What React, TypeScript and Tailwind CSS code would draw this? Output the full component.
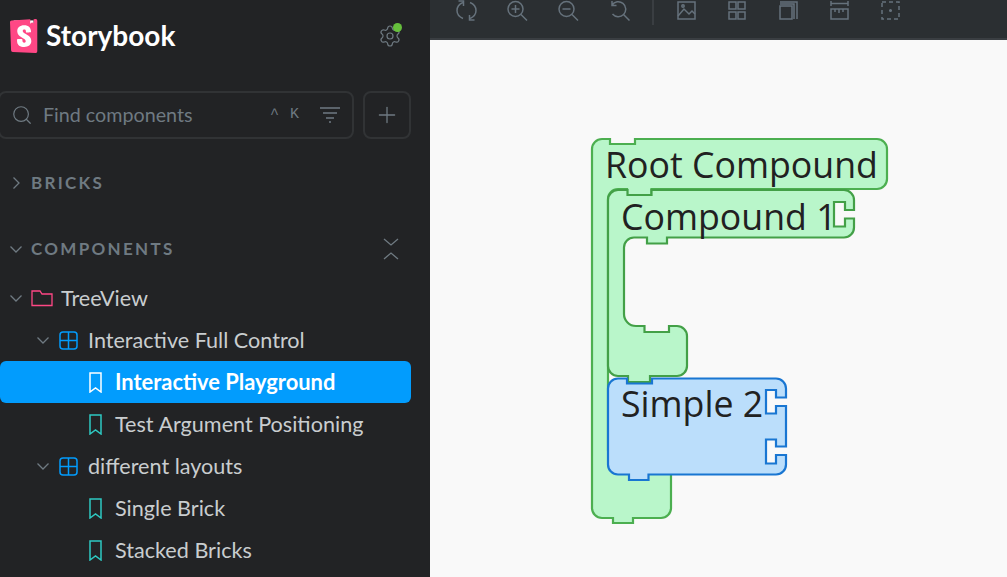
import { Search, Plus, Settings } from 'lucide-react';

type Row = {
  label: string;
  kind: 'folder' | 'component' | 'story';
  active?: boolean;
};

const rows: Row[] = [
  { label: 'TreeView', kind: 'folder' },
  { label: 'Interactive Full Control', kind: 'component' },
  { label: 'Interactive Playground', kind: 'story', active: true },
  { label: 'Test Argument Positioning', kind: 'story' },
  { label: 'different layouts', kind: 'component' },
  { label: 'Single Brick', kind: 'story' },
  { label: 'Stacked Bricks', kind: 'story' },
];

function Logo() {
  return (
    <svg width="28" height="34" viewBox="3 0 18.5 24" className="shrink-0">
      <rect x="5" y="1" width="14" height="22" fill="#fff" />
      <path
        fill="#FF4785"
        d="M16.71.243l-.12 2.71a.18.18 0 00.29.15l1.06-.8.9.7a.18.18 0 00.28-.14l-.1-2.76 1.33-.1a1.2 1.2 0 011.279 1.2v21.596a1.2 1.2 0 01-1.26 1.2l-16.096-.72a1.2 1.2 0 01-1.15-1.16l-.75-19.797a1.2 1.2 0 011.13-1.27L16.7.222zM13.64 9.3c0 .47 3.16.24 3.59-.08 0-3.2-1.72-4.89-4.859-4.89-3.15 0-4.899 1.72-4.899 4.29 0 4.45 5.999 4.53 5.999 6.959 0 .7-.32 1.1-1.05 1.1-.96 0-1.35-.49-1.3-2.16 0-.36-3.649-.48-3.769 0-.27 4.03 2.23 5.2 5.099 5.2 2.79 0 4.969-1.49 4.969-4.18 0-4.77-6.099-4.64-6.099-6.999 0-.97.72-1.1 1.13-1.1.45 0 1.25.07 1.19 1.87z"
      />
    </svg>
  );
}

function Chevron({ open, className }: { open: boolean; className?: string }) {
  return (
    <svg width="12" height="12" viewBox="0 0 12 12" fill="none" stroke="#6f7a82" strokeWidth="1.3" className={className}>
      {open ? <path d="M0.5 3.5 6 9l5.5-5.5" /> : <path d="M3.5 0.5 9 6l-5.5 5.5" />}
    </svg>
  );
}

function FolderIcon() {
  return (
    <svg width="22" height="18" viewBox="0 0 22 18" fill="none" stroke="#ff4785" strokeWidth="1.3" className="shrink-0">
      <path d="M1 2h8l2 3h10v11.5H1z" />
    </svg>
  );
}

function ComponentIcon() {
  return (
    <svg width="19" height="19" viewBox="0 0 19 19" fill="none" stroke="#029cfd" strokeWidth="1.5" className="shrink-0">
      <rect x="1" y="1" width="17" height="17" rx="3" />
      <path d="M9.5 1v17M1 9.5h17" />
    </svg>
  );
}

function StoryIcon({ active }: { active?: boolean }) {
  return (
    <svg width="13" height="21" viewBox="0 0 13 21" fill="none" stroke={active ? '#fff' : '#2ec9c2'} strokeWidth="1.5" className="shrink-0">
      <path d="M1 1h11v19l-5.5-4L1 20z" />
    </svg>
  );
}

function TreeRow({ row }: { row: Row }) {
  if (row.kind === 'folder') {
    return (
      <div className="h-[42px] flex items-center pl-[10px] text-[#c9cdcf]">
        <Chevron open />
        <span className="ml-[9px]"><FolderIcon /></span>
        <span className="ml-[8px]">{row.label}</span>
      </div>
    );
  }
  if (row.kind === 'component') {
    return (
      <div className="h-[42px] flex items-center pl-[37px] text-[#c9cdcf]">
        <Chevron open />
        <span className="ml-[10px]"><ComponentIcon /></span>
        <span className="ml-[10px]">{row.label}</span>
      </div>
    );
  }
  return (
    <div
      className={
        row.active
          ? 'h-[42px] flex items-center pl-[89px] rounded-[6px] bg-[#029cfd] text-white font-bold text-[21.9px]'
          : 'h-[42px] flex items-center pl-[89px] text-[#c9cdcf]'
      }
    >
      <StoryIcon active={row.active} />
      <span className="ml-[13px]">{row.label}</span>
    </div>
  );
}

function Sidebar() {
  return (
    <aside className="w-[430px] h-[577px] shrink-0 bg-[#222325] overflow-hidden font-['Lato',sans-serif]">
      <div className="flex items-center justify-between pt-[19px] pl-[10px] pr-[28px] h-[52px]">
        <div className="flex items-center gap-[8px]">
          <Logo />
          <span className="text-[28px] leading-[34px] font-bold text-white mb-[2px]">Storybook</span>
        </div>
        <div className="relative">
          <Settings size={24} strokeWidth={1.2} color="#6f7a82" />
          <span className="absolute -top-[1px] right-[0px] w-[9px] h-[9px] rounded-full bg-[#66bf3c]" />
        </div>
      </div>

      <div className="flex gap-[9px] mt-[39px] -ml-[2px] w-[413px] h-[48px]">
        <div className="flex-1 flex items-center rounded-[8px] border-2 border-[#313335] pl-[11px] pr-[12px]">
          <Search size={22} strokeWidth={1.3} color="#6f7a82" />
          <span className="ml-[10px] mb-[1px] text-[19.7px] text-[#6f7a82] flex-1">Find components</span>
          <span className="text-[15px] text-[#6f7a82] mr-[11px] font-['Liberation_Mono',monospace]">^</span>
          <span className="text-[15px] text-[#6f7a82] mr-[21px] font-['Liberation_Mono',monospace]">K</span>
          <svg width="20" height="16" viewBox="0 0 20 16" stroke="#6f7a82" strokeWidth="1.3" className="shrink-0">
            <path d="M0 1h20M3 6h14M6 11h8M9 15h2" />
          </svg>
        </div>
        <div className="w-[48px] flex items-center justify-center rounded-[8px] border-2 border-[#313335]">
          <Plus size={26} strokeWidth={1.2} color="#6f7a82" />
        </div>
      </div>

      <div className="flex items-center h-[24px] mt-[32px] pl-[10px] text-[17px] font-bold tracking-[2.3px] text-[#6f7a82]">
        <Chevron open={false} />
        <span className="ml-[9px]">BRICKS</span>
      </div>

      <div className="flex items-center justify-between h-[24px] mt-[42px] pl-[10px] pr-[31px] text-[17px] font-bold tracking-[2.3px] text-[#6f7a82]">
        <div className="flex items-center">
          <Chevron open />
          <span className="ml-[9px]">COMPONENTS</span>
        </div>
        <svg width="16" height="22" viewBox="0 0 16 22" fill="none" stroke="#6f7a82" strokeWidth="1.3">
          <path d="M1 1l7 6 7-6M1 21l7-6 7 6" />
        </svg>
      </div>

      <div className="mt-[16px] w-[411px] text-[21.6px]">
        {rows.map((row) => (
          <TreeRow key={row.label} row={row} />
        ))}
      </div>
    </aside>
  );
}

function ToolIcon({ children }: { children: React.ReactNode }) {
  return (
    <svg width="21" height="21" viewBox="0 0 21 21" fill="none" stroke="#66727c" strokeWidth="1.5" className="shrink-0">
      {children}
    </svg>
  );
}

function Toolbar() {
  return (
    <div className="h-[40px] shrink-0 bg-[#2b2f32] border-b-2 border-[#3a3e42] flex items-start pl-[26px] gap-[30px]">
      <ToolIcon>
        <path d="M7 2.5C3.5 4 1 7 1 10.5c0 3.5 2.5 6.5 6 8M14 18.5c3.5-1.5 6-4.5 6-8 0-3.5-2.5-6.5-6-8" />
        <path d="M2.5 1h5v5M18.5 20h-5v-5" />
      </ToolIcon>
      <ToolIcon>
        <circle cx="8.5" cy="9" r="7.5" />
        <path d="M14 14.5l6 6M8.5 5v8M4.5 9h8" />
      </ToolIcon>
      <ToolIcon>
        <circle cx="8.5" cy="9" r="7.5" />
        <path d="M14 14.5l6 6M4.5 9h8" />
      </ToolIcon>
      <ToolIcon>
        <path d="M3 5A7.5 7.5 0 1 1 3.5 14M3 1v4.5h4.5M14.5 14.5l6 6" />
      </ToolIcon>
      <div className="w-[2px] h-[25px] bg-[#3a3e42] -mx-[8px]" />
      <ToolIcon>
        <rect x="2" y="2" width="17" height="17" />
        <circle cx="7" cy="6" r="1.2" />
        <path d="M2 16l6-7 5 5 3-3 3 3" />
      </ToolIcon>
      <ToolIcon>
        <rect x="2" y="2" width="7" height="7" />
        <rect x="11" y="2" width="7" height="7" />
        <rect x="2" y="12" width="7" height="7" />
        <rect x="11" y="12" width="7" height="7" />
      </ToolIcon>
      <ToolIcon>
        <rect x="2" y="6" width="12" height="13" />
        <path d="M2 4h14v15M2 2h17v17" />
      </ToolIcon>
      <ToolIcon>
        <path d="M2 1v5M19 1v5M2 3.5h17" />
        <rect x="2" y="9" width="17" height="10" />
        <path d="M6 9v3M10 9v4M14 9v3" />
      </ToolIcon>
      <ToolIcon>
        <path strokeDasharray="4 3" d="M2 2h17v17H2z" />
        <circle cx="10.5" cy="10.5" r="0.8" fill="#66727c" />
      </ToolIcon>
    </div>
  );
}

function Canvas() {
  return (
    <svg viewBox="430 40 577 537" width="577" height="537" className="block font-['Open_Sans',sans-serif]">
      <path
        fill="#b9f6ca"
        stroke="#4caf50"
        strokeWidth="2.2"
        d="M602 139H610V144H635V139H877A10 10 0 0 1 887 149V179A10 10 0 0 1 877 189H651.5V195H627V189H618A10 10 0 0 0 608 199V450A10 10 0 0 0 618 460H661A10 10 0 0 1 671 470V508A10 10 0 0 1 661 518H633V523H613V518H602A10 10 0 0 1 592 508V149A10 10 0 0 1 602 139Z"
      />
      <path
        fill="#b9f6ca"
        stroke="#43a047"
        strokeWidth="2.2"
        d="M618 190H627.5V195H651.5V190H844A10 10 0 0 1 854 200V210H845V202H834V226.5H845V218.5H854V227.5A10 10 0 0 1 844 237.5H667V243.5H647V237.5H634A10 10 0 0 0 624 247.5V314A12 12 0 0 0 636 326H644.5V332H669V326H677A10 10 0 0 1 687 336V366A10 10 0 0 1 677 376H650V382H628V376H618A10 10 0 0 1 608 366V200A10 10 0 0 1 618 190Z"
      />
      <path
        fill="#bbdefb"
        stroke="#1976d2"
        strokeWidth="2.2"
        d="M618 378.5H627V383.5H652V378.5H776A10 10 0 0 1 786 388.5V397.5H776V390H766V413.5H776V406H786V446.5H776V439.5H766V463.5H776V455H786V464.5A10 10 0 0 1 776 474.5H648.5V480H629V474.5H618A10 10 0 0 1 608 464.5V388.5A10 10 0 0 1 618 378.5Z"
      />
      <text x="605" y="178" fontSize="35.7" fill="#212121">Root Compound</text>
      <text x="621" y="230" fontSize="35.7" fill="#212121">Compound 1</text>
      <text x="621" y="417" fontSize="35.7" fill="#212121">Simple 2</text>
    </svg>
  );
}

export default function App() {
  return (
    <div className="flex w-[1007px] h-[577px] overflow-hidden">
      <Sidebar />
      <main className="flex-1 flex flex-col bg-[#f9f9f9]">
        <Toolbar />
        <Canvas />
      </main>
    </div>
  );
}
